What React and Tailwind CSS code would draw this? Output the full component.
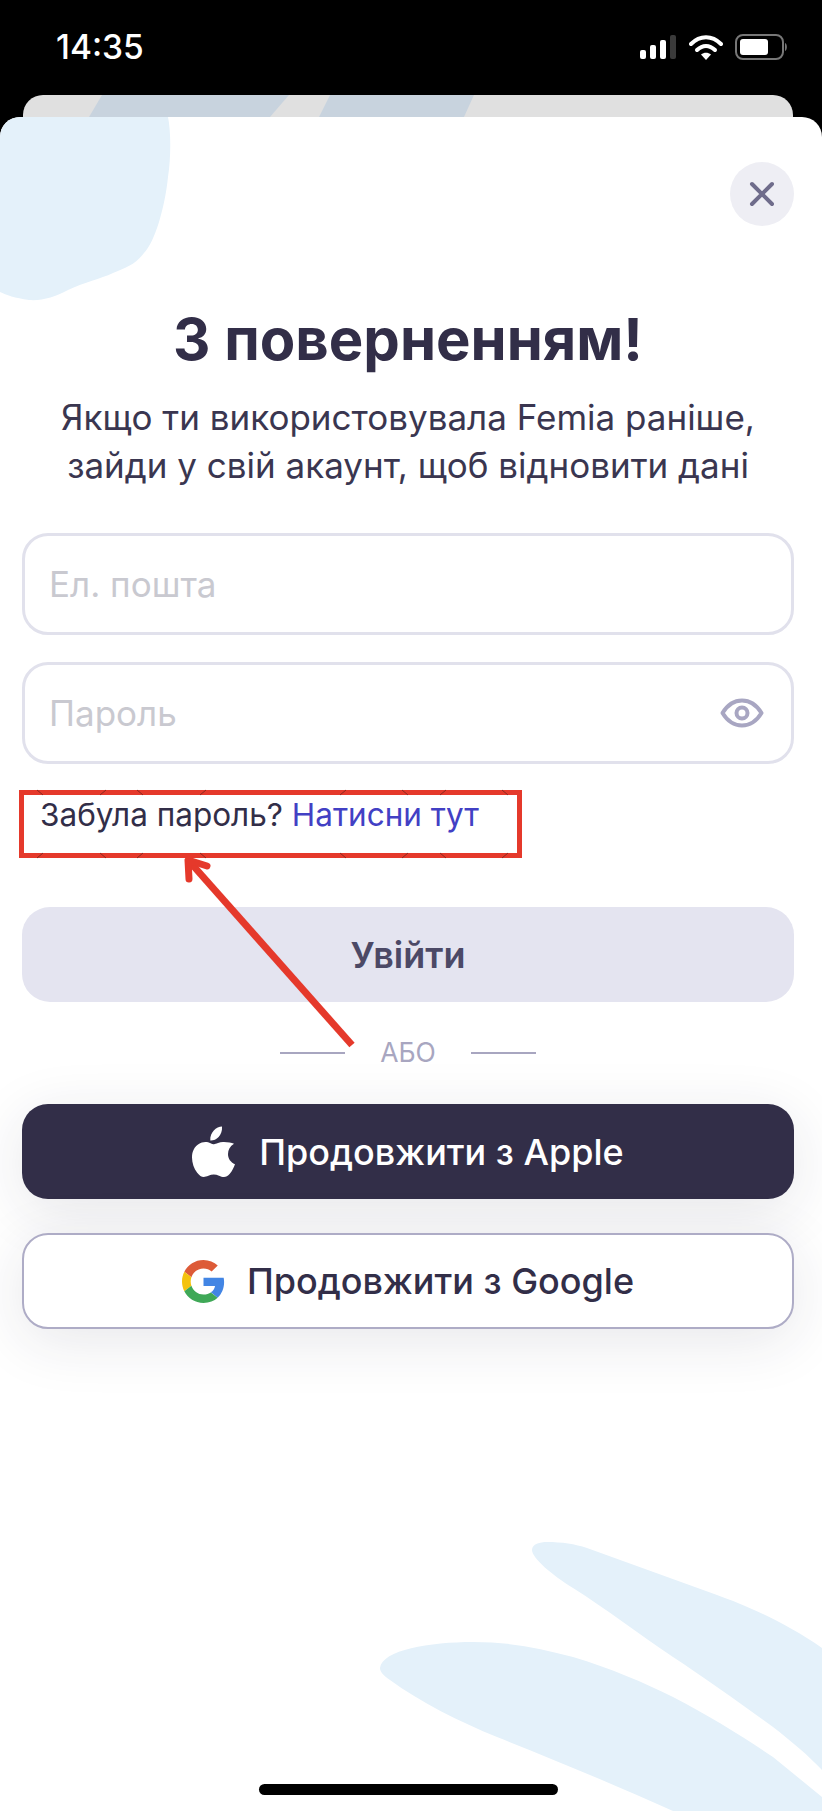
import React from "react";

function Signal() {
  return (
    <svg width="37" height="24" viewBox="0 0 37 24" className="block">
      <rect x="0" y="15" width="6" height="9" rx="2" fill="#fff" />
      <rect x="10" y="10" width="6" height="14" rx="2" fill="#fff" />
      <rect x="20" y="5" width="6" height="19" rx="2" fill="#fff" />
      <rect x="30" y="0" width="6" height="24" rx="2" fill="#3a3a3a" />
    </svg>
  );
}
function Wifi() {
  return (
    <svg width="34" height="25" viewBox="0 0 34 25" className="block">
      <path d="M2 9 C11 0 23 0 32 9" fill="none" stroke="#fff" strokeWidth="4" strokeLinecap="round" />
      <path d="M8 15 C13.5 9.5 20.5 9.5 26 15" fill="none" stroke="#fff" strokeWidth="4" strokeLinecap="round" />
      <path d="M12 19.5 C15 17 19 17 22 19.5 L17 25 Z" fill="#fff" />
    </svg>
  );
}
function Battery() {
  return (
    <svg width="53" height="26" viewBox="0 0 53 26" className="block">
      <rect x="1" y="1" width="47" height="24" rx="7" fill="none" stroke="#777" strokeWidth="2" />
      <rect x="5" y="5" width="28" height="16" rx="3" fill="#fff" />
      <path d="M50 9 C52.5 10 52.5 16 50 17 Z" fill="#777" />
    </svg>
  );
}
function Eye() {
  return (
    <svg width="44" height="30" viewBox="0 0 44 30" className="block">
      <path d="M2.5 15 C8 6 15 2.5 22 2.5 C29 2.5 36 6 41.5 15 C36 24 29 27.5 22 27.5 C15 27.5 8 24 2.5 15 Z" fill="none" stroke="#a8a6c2" strokeWidth="4" strokeLinejoin="round" />
      <circle cx="22" cy="15" r="5.5" fill="none" stroke="#a8a6c2" strokeWidth="4" />
    </svg>
  );
}
function AppleLogo() {
  return (
    <svg width="43" height="51" viewBox="0 0 43 51" className="block">
      <path fill="#fff" d="M30 0.5 C30.4 5 28.8 8.6 26.6 10.9 C24.2 13.4 21.2 14.6 18.3 14.4 C17.9 10.4 19.7 6.6 21.8 4.4 C24 2 27.4 0.6 30 0.5 Z M42 17.8 C38 20.4 36 23.8 36 28 C36 32.8 38.6 36.2 43 38.2 C41.8 41.8 40 45 37.8 47.8 C35.8 50 34 51 32 51 C30.2 51 28.8 50.4 27 49.7 C25.2 49 23.6 48.6 21.8 48.6 C20 48.6 18.2 49 16.4 49.8 C14.6 50.5 13.2 51 11.8 51 C9.4 51 7.4 49.6 5.2 46.8 C2 42.6 0 36.8 0 31.4 C0 25.2 2.6 20.6 6.4 18.2 C8.6 16.8 11 16 13.4 16 C15.2 16 17 16.6 18.6 17.2 C20 17.8 21 18.2 22 18.2 C23 18.2 24.2 17.6 26 17 C28 16.2 30 15.8 32 16 C36 16.3 39.6 16.4 42 17.8 Z" />
    </svg>
  );
}
function GoogleLogo() {
  return (
    <svg width="43" height="43" viewBox="0 0 48 48" className="block">
      <path fill="#DD5B38" d="M24 9.5c3.5 0 6.7 1.3 9.1 3.4l6.8-6.8C35.8 2.4 30.2 0 24 0 14.6 0 6.5 5.4 2.6 13.2l7.9 6.1C12.4 13.6 17.7 9.5 24 9.5z" />
      <path fill="#4285E4" d="M47 24.5c0-1.6-.2-3.2-.5-4.7H24v9.1h12.9c-.6 3-2.2 5.5-4.7 7.2l7.6 5.9C44.2 38 47 31.8 47 24.5z" />
      <path fill="#F4C20D" d="M10.5 28.7C10 27.2 9.7 25.6 9.7 24s.3-3.2.8-4.7l-7.9-6.1C.9 16.5 0 20.1 0 24s.9 7.5 2.6 10.8l7.9-6.1z" />
      <path fill="#3FA857" d="M24 48c6.5 0 11.9-2.1 15.8-5.8l-7.6-5.9c-2.1 1.4-4.9 2.3-8.2 2.3-6.3 0-11.6-4.1-13.5-9.8l-7.9 6.1C6.5 42.6 14.6 48 24 48z" />
    </svg>
  );
}

export default function App() {
  return (
    <div className="relative flex h-[1811px] w-[822px] flex-col overflow-hidden bg-black font-['Inter',sans-serif] text-[#322e48]">
      <div className="flex h-[95px] shrink-0 items-start justify-between pl-[56px] pr-[34px] pt-[27px]">
        <span className="text-[33.5px] font-medium leading-[40px] text-white">14:35</span>
        <div className="flex items-center gap-[12px] pt-[7px]">
          <Signal />
          <Wifi />
          <Battery />
        </div>
      </div>

      <div className="ml-[23px] h-[22px] w-[770px] shrink-0 overflow-hidden rounded-t-[20px] bg-[#e0e0e0]">
        <svg width="770" height="22" viewBox="0 0 770 22" className="block">
          <path d="M79 0 H266 L247 22 H66 Z" fill="#c8d3de" />
          <path d="M307 0 H451 L441 22 H296 Z" fill="#c8d3de" />
        </svg>
      </div>

      <main className="relative flex-1 overflow-hidden rounded-t-[20px] bg-white">
        <svg width="180" height="190" viewBox="0 0 180 190" className="absolute left-0 top-0">
          <path d="M0 0 H168 C171 15 171 40 168 60 C165 90 155 125 144 136 C135 148 125 151 113 156 C100 162 85 165 68 173 C55 180 42 184 29 183 C15 181 6 178 0 175 Z" fill="#e4f1fa" />
        </svg>
        <svg width="822" height="311" viewBox="0 0 822 311" className="absolute bottom-0 left-0">
          <path d="M532 50 C532 44 540 42 547 42 C562 42 575 44 587 48 L717 95 C745 105 785 122 822 148 V270 C810 257 790 240 773 227 C740 203 705 178 673 157 C640 135 605 108 573 88 C552 75 532 58 532 50 Z" fill="#e4f1fa" />
          <path d="M380 168 C382 150 430 142 473 142 C510 142 540 148 573 157 C610 168 645 183 673 197 C710 216 745 238 773 257 L822 297 V311 H673 C620 287 555 260 497 237 C460 222 420 202 390 180 C384 176 380 172 380 168 Z" fill="#e4f1fa" />
        </svg>

        <div className="relative flex flex-col pl-[22px] pr-[28px]">
          <div className="flex justify-end pt-[45px]">
            <button className="flex h-[64px] w-[64px] items-center justify-center rounded-full bg-[#eeeef4]">
              <svg width="26" height="26" viewBox="0 0 26 26">
                <path d="M3 3 L23 23 M23 3 L3 23" stroke="#6f6c8b" strokeWidth="4" strokeLinecap="round" />
              </svg>
            </button>
          </div>

          <h1 className="mt-[79px] whitespace-nowrap text-center text-[58px] font-bold leading-[68px]">З поверненням!</h1>
          <p className="mt-[20px] whitespace-nowrap text-center text-[35px] leading-[48px] text-[#3a3650]">
            Якщо ти використовувала Femia раніше,
            <br />
            зайди у свій акаунт, щоб відновити дані
          </p>

          <div className="mt-[44px] flex h-[102px] items-center rounded-[26px] border-[3px] border-[#e1e1ec] pl-[24px] text-[35px] text-[#c9c9d0]">
            Ел. пошта
          </div>
          <div className="mt-[27px] flex h-[102px] items-center justify-between rounded-[26px] border-[3px] border-[#e1e1ec] pl-[24px] pr-[27px] text-[35px] text-[#c9c9d0]">
            <span>Пароль</span>
            <Eye />
          </div>

          <p className="mt-[32px] pl-[18px] text-[31.5px] leading-[38px]">
            Забула пароль? <span className="text-[#4240c4]">Натисни тут</span>
          </p>

          <button className="mt-[73px] flex h-[95px] items-center justify-center rounded-[28px] bg-[#e4e4f0] text-[36px] font-semibold text-[#4c4966]">
            Увійти
          </button>

          <div className="mt-[36px] flex h-[30px] items-center justify-center gap-[35px] text-[26.5px] text-[#a8a6c0]">
            <span className="h-[2px] w-[65px] bg-[#a8a6c0]" />
            <span>АБО</span>
            <span className="h-[2px] w-[65px] bg-[#a8a6c0]" />
          </div>

          <div className="mt-[36px] flex flex-col gap-[34px]">
            <button className="flex h-[95px] items-center justify-center gap-[24px] rounded-[26px] bg-[#322e48] text-[36px] font-medium text-white shadow-[0_12px_60px_rgba(40,40,60,0.11)]">
              <AppleLogo />
              <span>Продовжити з Apple</span>
            </button>
            <button className="flex h-[96px] items-center justify-center gap-[22px] rounded-[26px] border-2 border-[#aeacc6] bg-white text-[36px] font-medium shadow-[0_12px_60px_rgba(40,40,60,0.11)]">
              <GoogleLogo />
              <span>Продовжити з Google</span>
            </button>
          </div>
        </div>
      </main>

      <div className="absolute bottom-[16px] left-[259px] h-[11px] w-[299px] rounded-full bg-black" />

      <svg width="822" height="1811" viewBox="0 0 822 1811" className="pointer-events-none absolute left-0 top-0">
        <rect x="21.5" y="792.5" width="498" height="63" fill="none" stroke="#e5392b" strokeWidth="5" />
        <g stroke="#8a2a20" strokeWidth="1" fill="none">
          <path d="M37 790 L43 795 M100 795 L106 790 M137 790 L143 795 M200 795 L206 790 M340 795 L346 790 M402 790 L408 795 M440 795 L446 790 M502 790 L508 795" />
          <path d="M37 858 L43 853 M100 853 L106 858 M137 858 L143 853 M200 853 L206 858 M340 853 L346 858 M402 858 L408 853 M440 853 L446 858 M502 858 L508 853" />
        </g>
        <path d="M352 1045 L189 861" fill="none" stroke="#e5392b" strokeWidth="7" />
        <path d="M207 866 L188 860 L189 879" fill="none" stroke="#e5392b" strokeWidth="7" strokeLinecap="round" strokeLinejoin="round" />
      </svg>
    </div>
  );
}
